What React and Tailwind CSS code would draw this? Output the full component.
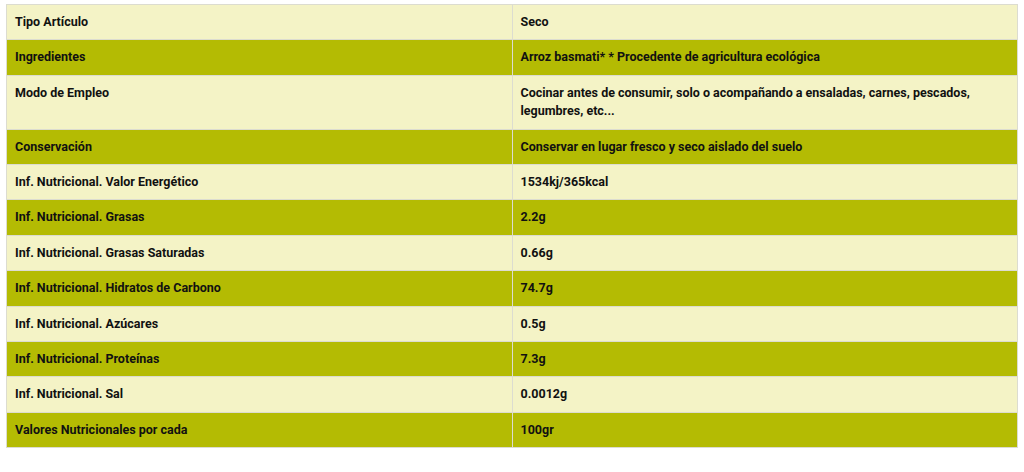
const rows = [
  ['Tipo Artículo', 'Seco'],
  ['Ingredientes', 'Arroz basmati* * Procedente de agricultura ecológica'],
  ['Modo de Empleo', 'Cocinar antes de consumir, solo o acompañando a ensaladas, carnes, pescados, legumbres, etc...'],
  ['Conservación', 'Conservar en lugar fresco y seco aislado del suelo'],
  ['Inf. Nutricional. Valor Energético', '1534kj/365kcal'],
  ['Inf. Nutricional. Grasas', '2.2g'],
  ['Inf. Nutricional. Grasas Saturadas', '0.66g'],
  ['Inf. Nutricional. Hidratos de Carbono', '74.7g'],
  ['Inf. Nutricional. Azúcares', '0.5g'],
  ['Inf. Nutricional. Proteínas', '7.3g'],
  ['Inf. Nutricional. Sal', '0.0012g'],
  ['Valores Nutricionales por cada', '100gr'],
];

export default function App() {
  return (
    <div className="bg-white h-[472px] pt-1 px-[6px]" style={{ fontFamily: 'Roboto, "Noto Sans", sans-serif' }}>
      <table className="w-full border-collapse border border-[#dcdcd0] text-[12.5px] leading-[18.4px] font-bold text-[#111]">
        <tbody>
          {rows.map(([k, v], i) => (
            <tr key={k} className={i % 2 === 0 ? 'bg-[#f4f3c6]' : 'bg-[#b4bb03]'}>
              <td className="w-1/2 border border-[#dcdcd0] px-2 py-2 align-top">{k}</td>
              <td className="w-1/2 border border-[#dcdcd0] px-2 py-2 align-top">{v}</td>
            </tr>
          ))}
        </tbody>
      </table>
    </div>
  );
}
